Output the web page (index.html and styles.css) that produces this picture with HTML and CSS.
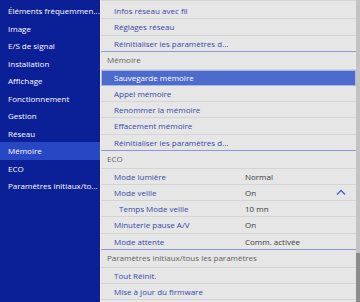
FILE: index.html
```html
<!DOCTYPE html>
<html lang="fr">
	<head>
		<meta charset="UTF-8">
		<title>Menu - Réseau / Mémoire</title>
		<link rel="stylesheet" href="styles.css">
	</head>
	<body>
		<div class="screen">
			<nav class="menu">
				<div class="menu-item">Éléments fréquemmen...</div>
				<div class="menu-item">Image</div>
				<div class="menu-item">E/S de signal</div>
				<div class="menu-item">Installation</div>
				<div class="menu-item">Affichage</div>
				<div class="menu-item">Fonctionnement</div>
				<div class="menu-item">Gestion</div>
				<div class="menu-item">Réseau</div>
				<div class="menu-item active">Mémoire</div>
				<div class="menu-item">ECO</div>
				<div class="menu-item">Paramètres initiaux/to...</div>
			</nav>
			<div class="panel">
				<div class="list">
					<div class="row"><span>Infos réseau avec fil</span></div>
					<div class="row"><span>Réglages réseau</span></div>
					<div class="row last"><span>Réinitialiser les paramètres d...</span></div>

					<div class="group">Mémoire</div>
					<div class="row selected"><span>Sauvegarde mémoire</span></div>
					<div class="row"><span>Appel mémoire</span></div>
					<div class="row"><span>Renommer la mémoire</span></div>
					<div class="row"><span>Effacement mémoire</span></div>
					<div class="row last"><span>Réinitialiser les paramètres d...</span></div>

					<div class="group">ECO</div>
					<div class="row"><span>Mode lumière</span><span class="value">Normal</span></div>
					<div class="row"><span>Mode veille</span><span class="value">On</span>
						<svg class="chevron" width="10" height="6" viewBox="0 0 10 6"><polyline points="1,5.5 5,1.5 9,5.5" fill="none" stroke="#4a5ccc" stroke-width="1.3"/></svg>
					</div>
					<div class="row sub"><span>Temps Mode veille</span><span class="value">10 mn</span></div>
					<div class="row"><span>Minuterie pause A/V</span><span class="value">On</span></div>
					<div class="row last"><span>Mode attente</span><span class="value">Comm. activée</span></div>

					<div class="group">Paramètres initiaux/tous les paramètres</div>
					<div class="row"><span>Tout Réinit.</span></div>
					<div class="row"><span>Mise à jour du firmware</span></div>
				</div>
				<div class="scrollbar"><div class="thumb"></div></div>
			</div>
		</div>
	</body>
</html>
```

FILE: styles.css
```css
html, body {
	margin: 0px;
	padding: 0px;
	width: 360px;
	height: 302px;
	overflow: hidden;
	font-family: 'Open Sans', 'Noto Sans', 'DejaVu Sans', sans-serif;
	font-size: 8px;
}
.screen {
	display: flex;
	width: 360px;
	height: 302px;
}

/* menu de gauche */
.menu {
	width: 100px;
	flex: none;
	box-sizing: border-box;
	padding-top: 2px;
	background-color: #0b1f97;
}
.menu-item {
	height: 17.5px;
	line-height: 17.5px;
	padding-left: 8px;
	color: #fff;
	white-space: nowrap;
	overflow: hidden;
}
.menu-item.active {
	background-color: #2847c4;
}

/* panneau de droite */
.panel {
	flex: 1;
	display: flex;
	background-color: #e6e6e6;
	border-left: 1px solid #f2f2f2;
}
.list {
	flex: 1;
	padding-top: 2px;
	border-top: 1px solid #d6d6d6;
	margin-top: 0px;
}
.row {
	display: grid;
	grid-template-columns: 131px 1fr auto;
	align-items: center;
	box-sizing: border-box;
	height: 16.25px;
	padding-left: 13px;
	border-bottom: 1px solid #d4d4d4;
	color: #3646a8;
	white-space: nowrap;
}
.row.sub {
	padding-left: 18px;
	grid-template-columns: 126px 1fr auto;
}
.row.last {
	border-bottom-color: #8f98d4;
}
.row.selected {
	background-color: #4d6bcd;
	color: #fff;
	outline: 1px solid #a9b6e6;
	outline-offset: -1px;
	border-bottom-color: #a9b6e6;
}
.row > .value {
	color: #3a3a3a;
}
.row > .chevron {
	margin-right: 10px;
}
.group {
	box-sizing: border-box;
	height: 17.75px;
	line-height: 16px;
	padding-left: 6px;
	color: #626262;
	border-bottom: 1px solid #d4d4d4;
	white-space: nowrap;
}

.scrollbar {
	width: 4px;
	flex: none;
	display: flex;
	flex-direction: column;
	justify-content: flex-end;
	background-color: #c3c3c3;
}
.scrollbar > .thumb {
	height: 49px;
	background-color: #8c8c8c;
}
```
